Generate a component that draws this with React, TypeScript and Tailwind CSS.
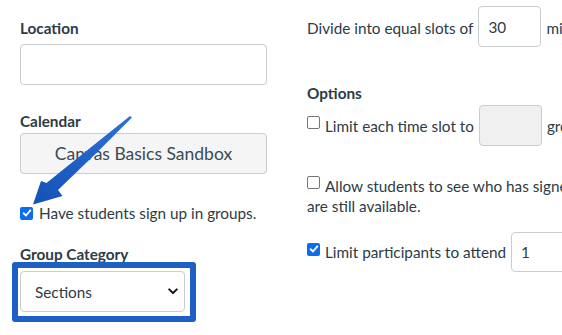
import React from 'react';

const Check: React.FC<{ checked?: boolean; className?: string }> = ({ checked, className = '' }) =>
  checked ? (
    <span className={`inline-flex h-[13px] w-[13px] flex-none items-center justify-center rounded-[2px] bg-[#0b6cf0] ${className}`}>
      <svg viewBox="0 0 12 12" className="h-[10px] w-[10px]" aria-hidden="true">
        <path d="M2 6.3 L4.8 9 L10 2.8" fill="none" stroke="#fff" strokeWidth="2.2" strokeLinecap="round" strokeLinejoin="round" />
      </svg>
    </span>
  ) : (
    <span className={`inline-block h-[13px] w-[13px] flex-none rounded-[2px] border border-[#767676] bg-white ${className}`} />
  );

// annotation arrow laid over the form
const Arrow = () => (
  <svg className="pointer-events-none absolute left-0 top-0" width="562" height="335" aria-hidden="true">
    <defs>
      <linearGradient id="arrowFill" x1="130" y1="117" x2="38" y2="207" gradientUnits="userSpaceOnUse">
        <stop offset="0" stopColor="#2b70d8" />
        <stop offset="1" stopColor="#1552b6" />
      </linearGradient>
    </defs>
    <path
      d="M130 116 L132 117.5 Q95 155 58 190 L62.5 196 L33 204.5 L41 181 L46.5 183 Q90 148 130 116 Z"
      fill="url(#arrowFill)"
    />
  </svg>
);

export default function App() {
  return (
    <div className="relative h-[335px] w-[562px] overflow-hidden bg-white font-[family-name:Lato,sans-serif] text-[15.3px] leading-[20px] text-[#2d3b45]">
      <div className="flex w-[800px]">
        <div className="ml-[20px] flex w-[247px] flex-none flex-col">
          <div className="mt-[18px] font-bold">Location</div>
          <div className="mt-[6px] h-[41px] rounded-[4px] border border-[#c7cdd1] bg-white" />
          <div className="mt-[26px] font-bold">Calendar</div>
          <div className="mt-[2px] flex h-[41px] items-center justify-center rounded-[4px] border border-[#c7cdd1] bg-[#f5f5f5] text-[17.5px] text-[#394b58]">
            Canvas Basics Sandbox
          </div>
          <div className="mt-[29px] flex items-center gap-[6px]">
            <Check checked />
            <span className="whitespace-nowrap">Have students sign up in groups.</span>
          </div>
          <div className="mt-[21px] font-bold">Group Category</div>
          <div className="-ml-[8px] -mt-[2px] w-[184px] rounded-[3px] border-[6px] border-[#1d5fc2] pb-[4px] pl-[2px] pr-[5px] pt-[3px]">
            <div className="flex h-[41px] items-center justify-between rounded-[4px] border border-[#c7cdd1] bg-white pl-[14px] pr-[6px]">
              <span>Sections</span>
              <svg viewBox="0 0 12 8" className="h-[7px] w-[10px]" aria-hidden="true">
                <path d="M1.5 1.5 L6 6 L10.5 1.5" fill="none" stroke="#111" strokeWidth="2.4" strokeLinecap="round" strokeLinejoin="round" />
              </svg>
            </div>
          </div>
        </div>

        <div className="ml-[40px] flex flex-none flex-col whitespace-nowrap">
          <div className="mt-[6px] flex items-center gap-[5px]">
            <span className="mt-[3px]">Divide into equal slots of</span>
            <span className="flex h-[41px] w-[63px] items-center rounded-[4px] border border-[#c7cdd1] px-[9px]">30</span>
            <span className="mt-[3px]">minutes long</span>
          </div>
          <div className="mt-[36px] font-bold">Options</div>
          <div className="mt-[2px] flex items-center gap-[5px]">
            <Check className="mb-[6px]" />
            <span>Limit each time slot to</span>
            <span className="h-[41px] w-[63px] rounded-[4px] border border-[#c7cdd1] bg-[#f0f0f0]" />
            <span>groups.</span>
          </div>
          <div className="mt-[30px] flex items-start gap-[5px]">
            <Check />
            <span>Allow students to see who has signed up for time slots that</span>
          </div>
          <div>are still available.</div>
          <div className="mt-[16px] flex items-center gap-[5px]">
            <Check checked className="mb-[6px]" />
            <span>Limit participants to attend</span>
            <span className="flex h-[40px] w-[63px] items-center rounded-[4px] border border-[#c7cdd1] px-[9px]">1</span>
          </div>
        </div>
      </div>
      <Arrow />
    </div>
  );
}
